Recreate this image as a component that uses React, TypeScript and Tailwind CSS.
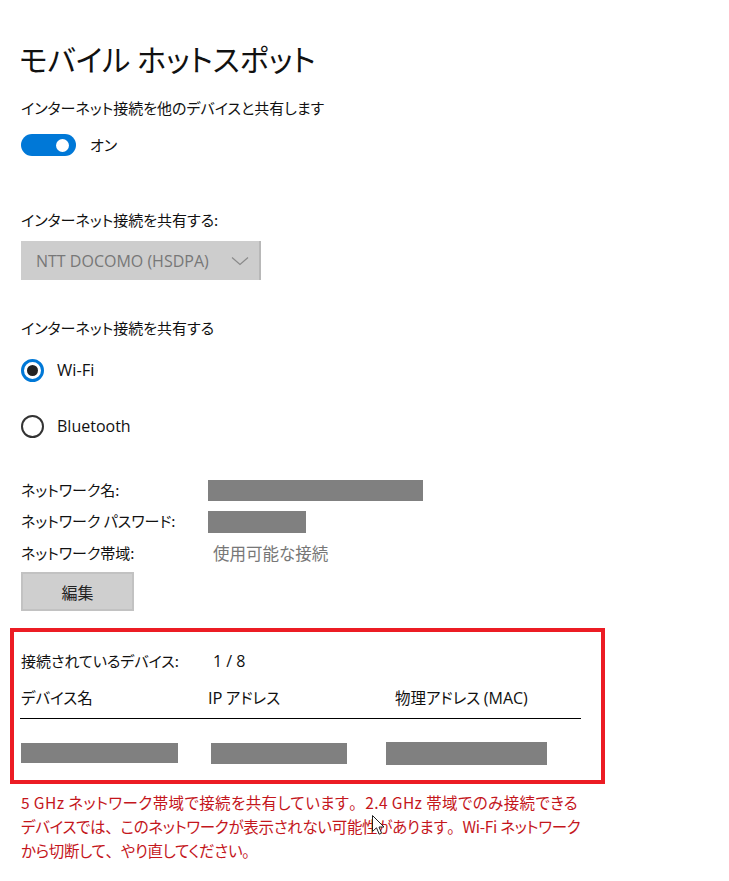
import React from "react";

const font = {
  fontFamily: '"Noto Sans CJK JP", "Open Sans", sans-serif',
};
const latin = { fontFamily: '"Open Sans", "Noto Sans", sans-serif' };

function Radio({ checked }: { checked: boolean }) {
  return checked ? (
    <div className="w-[23px] h-[23px] rounded-full border-[3px] border-[#0078d7] flex items-center justify-center">
      <div className="w-[11px] h-[11px] rounded-full bg-[#222]" />
    </div>
  ) : (
    <div className="w-[23px] h-[23px] rounded-full border-2 border-[#333]" />
  );
}

function P({ c }: { c: string }) {
  return <span className="[font-feature-settings:normal]">{c}</span>;
}

export default function App() {
  return (
    <div
      className="w-[729px] h-[881px] bg-white text-[#111] relative overflow-hidden [font-feature-settings:'palt']"
      style={font}
    >
      <div className="pl-[21px] flex flex-col">
        <div className="h-[36px] shrink-0" />
        <div className="h-[44px] flex items-center text-[30px] leading-none -ml-[2px]">
          モバイル ホットスポット
        </div>
        <div className="h-[16px] shrink-0" />
        <div className="h-[24px] flex items-center text-[15px]">
          インターネット接続を他のデバイスと共有します
        </div>
        <div className="h-[14px] shrink-0" />
        <div className="h-[22px] flex items-center gap-[14px]">
          <div className="w-[55px] h-[22px] rounded-full bg-[#0078d7] flex items-center justify-end pr-[7px]">
            <div className="w-[13px] h-[13px] rounded-full bg-white" />
          </div>
          <span className="text-[15px]">オン</span>
        </div>
        <div className="h-[52px] shrink-0" />
        <div className="h-[24px] flex items-center text-[15px]">
          インターネット接続を共有する:
        </div>
        <div className="h-[9px] shrink-0" />
        <div className="w-[240px] h-[39px] bg-[#cdcdcd] border-r-2 border-[#b8b8b8] flex items-center pl-[15px] gap-[22px] text-[#777] text-[16px]">
          <span style={latin}>NTT DOCOMO (HSDPA)</span>
          <svg width="18" height="10" viewBox="0 0 18 10">
            <path d="M1 1.5 L9 8.5 L17 1.5" fill="none" stroke="#8a8a8a" strokeWidth="1.2" />
          </svg>
        </div>
        <div className="h-[36px] shrink-0" />
        <div className="h-[24px] flex items-center text-[15px]">インターネット接続を共有する</div>
        <div className="h-[18px] shrink-0" />
        <div className="h-[24px] flex items-center gap-[13px]">
          <Radio checked />
          <span className="text-[16.5px]" style={latin}>Wi-Fi</span>
        </div>
        <div className="h-[32px] shrink-0" />
        <div className="h-[24px] flex items-center gap-[13px]">
          <Radio checked={false} />
          <span className="text-[16px]" style={latin}>Bluetooth</span>
        </div>
        <div className="h-[36px] shrink-0" />
        <div className="grid grid-cols-[187px_1fr] items-center text-[15px]">
          <div className="h-[32px] flex items-center">ネットワーク名:</div>
          <div className="h-[32px] flex items-center">
            <div className="w-[215px] h-[21px] bg-[#808080]" />
          </div>
          <div className="h-[31px] flex items-center">ネットワーク パスワード:</div>
          <div className="h-[31px] flex items-center">
            <div className="w-[98px] h-[22px] bg-[#808080]" />
          </div>
          <div className="h-[32px] flex items-center">ネットワーク帯域:</div>
          <div className="h-[32px] flex items-center pl-[5px] text-[#777] text-[16.5px]">使用可能な接続</div>
        </div>
        <div className="h-[3px] shrink-0" />
        <div className="w-[113px] h-[39px] bg-[#cfcfcf] border-2 border-[#c2c2c2] flex items-center justify-center text-[16px] text-[#222]">
          編集
        </div>
        <div className="h-[17px] shrink-0" />
        <div className="-ml-[11px] w-[595px] h-[156px] border-[4px] border-[#ec1c24] flex flex-col pl-[7px]">
          <div className="h-[17px] shrink-0" />
          <div className="h-[24px] flex items-center text-[15px]">
            <span className="w-[192px]">接続されているデバイス:</span>
            <span className="text-[16px]" style={latin}>1 / 8</span>
          </div>
          <div className="h-[13px] shrink-0" />
          <div className="h-[24px] flex items-center text-[15.5px]">
            <span className="w-[187px]">デバイス名</span>
            <span className="w-[187px]">IP アドレス</span>
            <span>
              物理アドレス <span className="text-[16px]" style={latin}>(MAC)</span>
            </span>
          </div>
          <div className="h-[8px] shrink-0" />
          <div className="h-px bg-black ml-[-1px] w-[561px]" />
          <div className="h-[23px] shrink-0" />
          <div className="flex items-start">
            <div className="w-[157px] h-[20px] bg-[#808080] mt-[1px]" />
            <div className="w-[136px] h-[21px] bg-[#808080] ml-[33px] mt-[1px]" />
            <div className="w-[161px] h-[23px] bg-[#808080] ml-[39px]" />
          </div>
        </div>
        <div className="mt-[6px] text-[15.5px] leading-[24px] text-[#c4161c] whitespace-nowrap flex flex-col">
          <span className="tracking-[0.4px]">
            5 GHz ネットワーク帯域で接続を共有しています<P c="。" />2.4 GHz 帯域でのみ接続できる
          </span>
          <span className="tracking-[-0.3px]">
            デバイスでは<P c="、" />このネットワークが表示されない可能性があります<P c="。" />Wi-Fi ネットワーク
          </span>
          <span className="tracking-[-0.3px]">
            から切断して<P c="、" />やり直してください<P c="。" />
          </span>
        </div>
      </div>
      <svg
        className="absolute left-[372px] top-[815px]"
        width="13"
        height="21"
        viewBox="0 0 13 21"
      >
        <path
          d="M0.5 0.5 L0.5 16.5 L4.5 12.8 L7.2 19.2 L9.6 18.2 L7 12 L12 12 Z"
          fill="white"
          stroke="#222"
          strokeWidth="1"
        />
      </svg>
    </div>
  );
}
